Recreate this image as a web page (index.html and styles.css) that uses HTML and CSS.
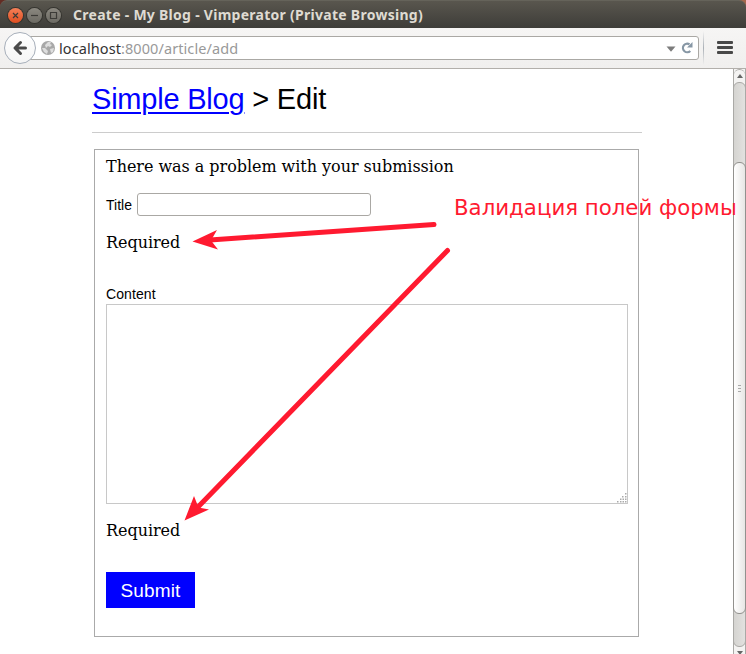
FILE: index.html
```
<!DOCTYPE html>
<html lang="en">
<head>
<meta charset="utf-8">
<title>Create - My Blog</title>
<link rel="stylesheet" href="styles.css">
</head>
<body>
<div class="window">
  <header class="titlebar">
    <div class="frame">
      <span class="control close"><svg width="15" height="15" viewBox="0 0 15 15"><path d="M5 5l5 5M10 5l-5 5"/></svg></span>
      <span class="control"><svg width="15" height="15" viewBox="0 0 15 15"><path d="M4 7.5h7"/></svg></span>
      <span class="control"><svg width="15" height="15" viewBox="0 0 15 15"><path d="M4.5 4.5h6v6h-6z"/></svg></span>
      <span class="caption">Create - My Blog - Vimperator (Private Browsing)</span>
    </div>
  </header>
  <nav class="toolbar">
    <div class="back"><svg width="16" height="16" viewBox="0 0 16 16"><path d="M8.500 2.500L3 8l5.500 5.500M3.500 8H13.500" fill="none" stroke="#4a4a4a" stroke-width="3" stroke-linecap="round" stroke-linejoin="round"/></svg></div>
    <div class="address">
      <svg class="globe" width="14" height="14" viewBox="0 0 14 14"><circle cx="7" cy="7" r="7" fill="#a8a8a8"/><path d="M7 1l3 0-1 2 2 1-2 2-2-1-2 2-1-3zM1 7l3 0 3 3-1 3-3-2zM9 8l4-1-1 4-2 1z" fill="#dedede"/></svg>
      <span class="url"><b>localhost</b>:8000/article/add</span>
      <svg class="drop" width="10" height="6" viewBox="0 0 10 6"><path d="M.5.5h9L5 5.700z" fill="#7c7c7c"/></svg>
      <svg class="reload" width="12" height="12" viewBox="0 0 12 12"><path d="M8.500 2.300A4.300 4.300 0 1 0 9.300 9" fill="none" stroke="#8797a5" stroke-width="2.200"/><path d="M11.500 0v5.500H6z" fill="#8797a5"/></svg>
    </div>
    <span class="separator"></span>
    <div class="menu"><i></i><i></i><i></i></div>
  </nav>
  <div class="viewport">
    <main class="page">
      <h1><a href="#">Simple Blog</a> &gt; Edit</h1>
      <form class="form">
        <p class="problem">There was a problem with your submission</p>
        <div class="field"><label for="title">Title</label><input id="title" type="text"></div>
        <p class="required">Required</p>
        <label class="content-label" for="content">Content</label>
        <div class="area"><textarea id="content"></textarea>
          <svg class="grip" width="10" height="10" viewBox="0 0 10 10"><path d="M8 0h1.500v1.500H8zM8 3h1.500v1.500H8zM5 3h1.500v1.500H5zM8 5.500h1.500V7H8zM5.500 5.500H7V7H5.500zM3 5.500h1.500V7H3zM8 8h1.500v1.500H8zM5.500 8H7v1.500H5.500zM3 8h1.500v1.500H3zM0 8h1.500v1.500H0z"/></svg>
        </div>
        <p class="required">Required</p>
        <button class="submit" type="button">Submit</button>
      </form>
    </main>
    <aside class="scrollbar">
      <div class="step"><svg width="6" height="4" viewBox="0 0 6 4"><path d="M0 4h6L3 0z"/></svg></div>
      <div class="track"><div class="thumb"><i></i><i></i><i></i></div></div>
      <div class="step down"><svg width="6" height="4" viewBox="0 0 6 4"><path d="M0 0h6L3 4z"/></svg></div>
    </aside>
  </div>
  <svg class="arrows" width="746" height="654" viewBox="0 0 746 654">
    <path d="M434 224.500L210 240M447.500 250.500L198 507"/>
    <path class="head" d="M192.500 241.500L217 230l-6 10.500 7 9zM184.500 520.500L194 496l4.500 11.500 10.500 2z"/>
  </svg>
  <span class="note">Валидация полей формы</span>
</div>
</body>
</html>
```

FILE: styles.css
```
* { box-sizing: border-box; }
body { margin: 0; overflow: hidden; background: #fff; color: #000; }
.window { position: relative; display: flex; flex-direction: column; width: 746px; height: 654px; overflow: hidden; }
.titlebar { height: 28px; background: linear-gradient(90deg, #632d24 50%, #a5674b 50%); }
.frame { display: flex; align-items: center; gap: 4px; height: 28px; padding: 1px 8px 0; border-radius: 7px 7px 0 0; border-top: 1px solid #65635a; background: linear-gradient(#59564e, #3e3d39); }
.control { display: flex; width: 15px; height: 15px; border-radius: 50%; background: linear-gradient(#8b8880, #6c6a63); box-shadow: 0 0 0 1px #35342f; }
.control svg { fill: none; stroke: #3c3b37; stroke-width: 1.2; }
.control.close { background: linear-gradient(#f58058, #e04e20); }
.caption { margin-left: 8px; color: #dfdbd2; font: bold 14px/20px "Noto Sans", sans-serif; white-space: nowrap; letter-spacing: .275px; }
.toolbar { display: flex; align-items: center; height: 41px; padding: 0 13px 1px 4px; border-bottom: 1px solid #b2afab; background: linear-gradient(#f6f5f4, #f0efee); }
.back { z-index: 1; display: flex; align-items: center; justify-content: center; width: 32px; height: 32px; border: 1px solid #a7afba; border-radius: 50%; background: linear-gradient(#fff, #f5f5f5); }
.address { display: flex; align-items: center; width: 670px; height: 24px; margin-left: -7px; padding: 0 5px 0 11px; border: 1px solid #aaa8a4; border-radius: 0 3px 3px 0; background: #fff; }
.url { margin: 1px auto 0 4px; color: #999; font: 14.5px/20px "Noto Sans", sans-serif; letter-spacing: .08px; }
.url b { color: #333; font-weight: normal; }
.drop { margin-right: 5px; position: relative; top: 1px; }
.separator { width: 1px; height: 34px; margin: 0 13px 0 4px; background: linear-gradient(transparent, #aab0b6, transparent); }
.menu { display: flex; flex-direction: column; gap: 2px; width: 16px; }
.menu i { height: 3px; border-radius: 1px; background: #484848; }
.viewport { display: flex; height: 585px; }
.page { width: 733px; padding: 11px 91px 0 92px; }
h1 { height: 53px; margin: 0 0 16px; border-bottom: 1px solid #ccc; font: 29px/38px "Liberation Sans", sans-serif; letter-spacing: -.21px; white-space: nowrap; }
h1 a { color: #00f; text-decoration-thickness: 2px; text-underline-offset: 3px; }
.form { width: 545px; height: 488px; margin-left: 2px; padding: 7px 10px 0 11px; border: 1px solid #aaa; }
.form p { margin: 0; font: 16px/20px "DejaVu Serif", serif; letter-spacing: -.04px; }
.field { display: flex; align-items: center; gap: 5px; height: 24px; margin-top: 15px; }
label { font: 14px/16px "Liberation Sans", sans-serif; }
.field label { padding-top: 2px; }
input { width: 234px; height: 23px; border: 1px solid #aaa8a4; border-radius: 3px; background: #fff; }
.form .required { height: 20px; margin-top: 16px; line-height: 22px; }
.content-label { display: block; margin-top: 34px; letter-spacing: .1px; }
.area { position: relative; width: 522px; height: 200px; margin-top: 2px; }
textarea { display: block; width: 522px; height: 200px; border: 1px solid #c8c8c8; resize: none; }
.grip { position: absolute; right: 1px; bottom: 1px; fill: #aaa; }
.submit { display: block; width: 89px; height: 36px; margin-top: 32px; padding: 1px 0 0; border: 0; background: #00f; color: #fff; font: 19px/35px "Liberation Sans", sans-serif; letter-spacing: .15px; }
.scrollbar { display: flex; flex-direction: column; width: 13px; height: 585px; border: 1px solid #aaa9a6; border-width: 0 1px; background: #f4f3f2; }
.step { display: flex; align-items: center; justify-content: center; height: 13px; flex: none; border-top: 1px solid #aaa9a6; border-radius: 6px 6px 0 0; fill: #666; }
.track { height: 565px; flex: none; margin: 0 -1px; padding-top: 79px; border: 1px solid #aaa9a6; border-radius: 6px; background: linear-gradient(90deg, #d5d4d1, #e2e1df); }
.thumb { display: flex; flex-direction: column; align-items: center; justify-content: center; gap: 2px; width: 13px; height: 452px; margin-left: -1px; border: 1px solid #92918e; border-radius: 6px; background: linear-gradient(90deg, #fff, #e7e6e4); }
.thumb i { width: 3px; height: 1px; background: #aaa; }
.step.down { height: 11px; border: 0; }
.arrows { position: absolute; top: 0; left: 0; fill: none; stroke: #ff1a30; stroke-width: 5; stroke-linecap: round; }
.arrows .head { fill: #ff1a30; stroke: none; }
.note { position: absolute; left: 454px; top: 195px; color: #ff1a30; font: 21.300px/26px "DejaVu Sans", sans-serif; white-space: nowrap; }
```
